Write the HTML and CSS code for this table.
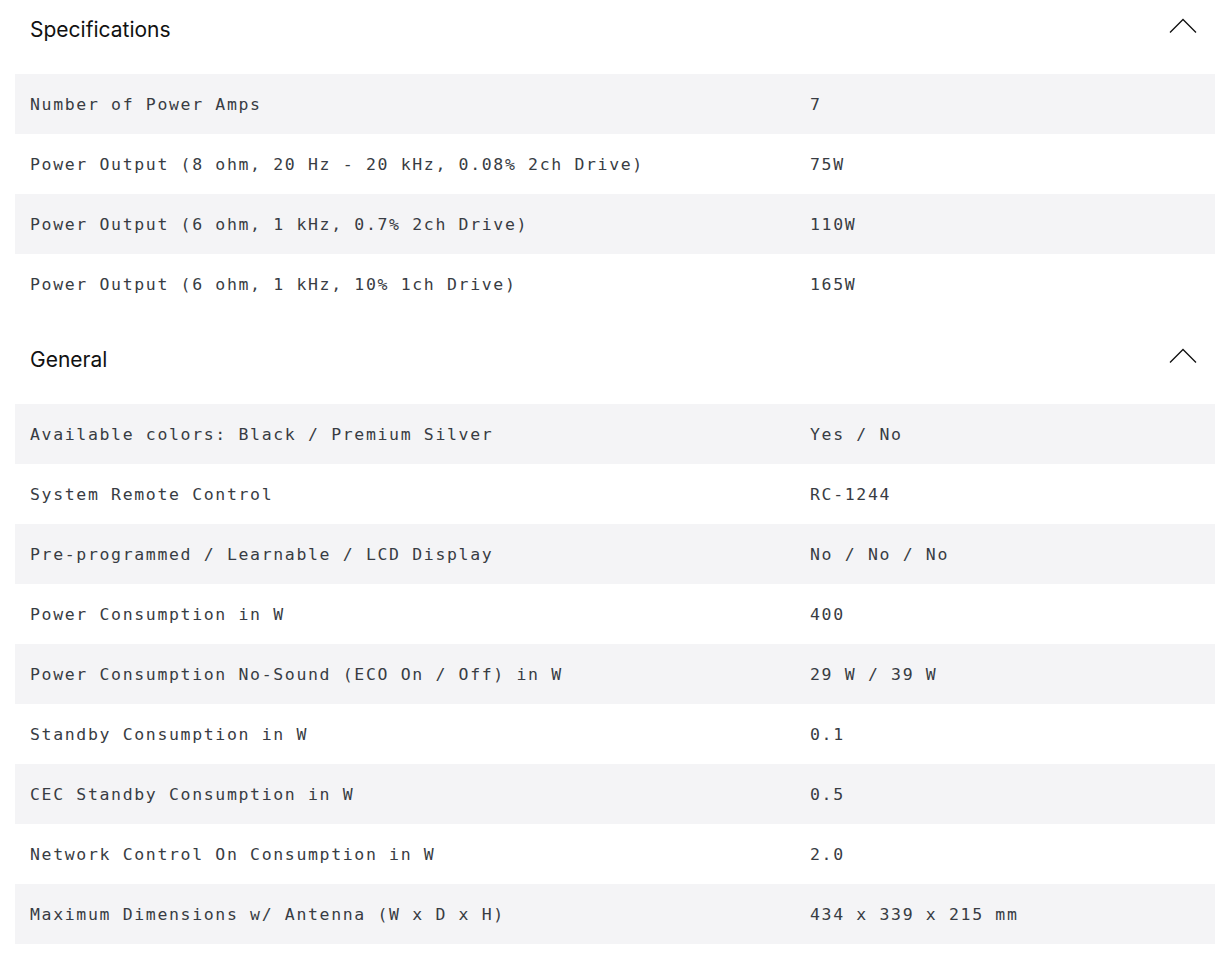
FILE: index.html
```html
<!DOCTYPE html>
<html>
<head>
<meta charset="utf-8">
<link rel="stylesheet" href="styles.css">
</head>
<body>
<div class="page">
  <section class="section">
    <div class="section-head">
      <h2 class="section-title">Specifications</h2>
      <svg class="chevron" width="28" height="16" viewBox="0 0 28 16"><path d="M1 14.5 L14 1.5 L27 14.5" fill="none" stroke="#111" stroke-width="1.3"/></svg>
    </div>
    <div class="rows">
      <div class="row"><div class="label">Number of Power Amps</div><div class="value">7</div></div>
      <div class="row"><div class="label">Power Output (8 ohm, 20 Hz - 20 kHz, 0.08% 2ch Drive)</div><div class="value">75W</div></div>
      <div class="row"><div class="label">Power Output (6 ohm, 1 kHz, 0.7% 2ch Drive)</div><div class="value">110W</div></div>
      <div class="row"><div class="label">Power Output (6 ohm, 1 kHz, 10% 1ch Drive)</div><div class="value">165W</div></div>
    </div>
  </section>
  <section class="section">
    <div class="section-head">
      <h2 class="section-title">General</h2>
      <svg class="chevron" width="28" height="16" viewBox="0 0 28 16"><path d="M1 14.5 L14 1.5 L27 14.5" fill="none" stroke="#111" stroke-width="1.3"/></svg>
    </div>
    <div class="rows">
      <div class="row"><div class="label">Available colors: Black / Premium Silver</div><div class="value">Yes / No</div></div>
      <div class="row"><div class="label">System Remote Control</div><div class="value">RC-1244</div></div>
      <div class="row"><div class="label">Pre-programmed / Learnable / LCD Display</div><div class="value">No / No / No</div></div>
      <div class="row"><div class="label">Power Consumption in W</div><div class="value">400</div></div>
      <div class="row"><div class="label">Power Consumption No-Sound (ECO On / Off) in W</div><div class="value">29 W / 39 W</div></div>
      <div class="row"><div class="label">Standby Consumption in W</div><div class="value">0.1</div></div>
      <div class="row"><div class="label">CEC Standby Consumption in W</div><div class="value">0.5</div></div>
      <div class="row"><div class="label">Network Control On Consumption in W</div><div class="value">2.0</div></div>
      <div class="row"><div class="label">Maximum Dimensions w/ Antenna (W x D x H)</div><div class="value">434 x 339 x 215 mm</div></div>
    </div>
  </section>
</div>
</body>
</html>
```

FILE: styles.css
```css
html, body {
  margin: 0;
  padding: 0;
  background: #fff;
}
.page {
  padding: 0 14px 0 15px;
  display: flex;
  flex-direction: column;
  gap: 16px;
}
.section-head {
  height: 74px;
  display: flex;
  align-items: flex-start;
  justify-content: space-between;
  padding: 0 18px 0 15px;
}
.section-title {
  margin: 17px 0 0 0;
  font-family: Inter, "Liberation Sans", sans-serif;
  font-weight: 400;
  font-size: 21px;
  line-height: 26px;
  color: #111;
}
.chevron {
  margin-top: 18px;
}
.rows {
  display: flex;
  flex-direction: column;
}
.row {
  height: 60px;
  display: grid;
  grid-template-columns: 780px 1fr;
  align-items: center;
  font-family: "DejaVu Sans Mono", "Liberation Mono", monospace;
  font-size: 16.5px;
  letter-spacing: 1.65px;
  color: #383c43;
}
.row:nth-child(odd) {
  background: #f4f4f6;
}
.label, .value {
  padding-left: 15px;
  white-space: nowrap;
}
```
